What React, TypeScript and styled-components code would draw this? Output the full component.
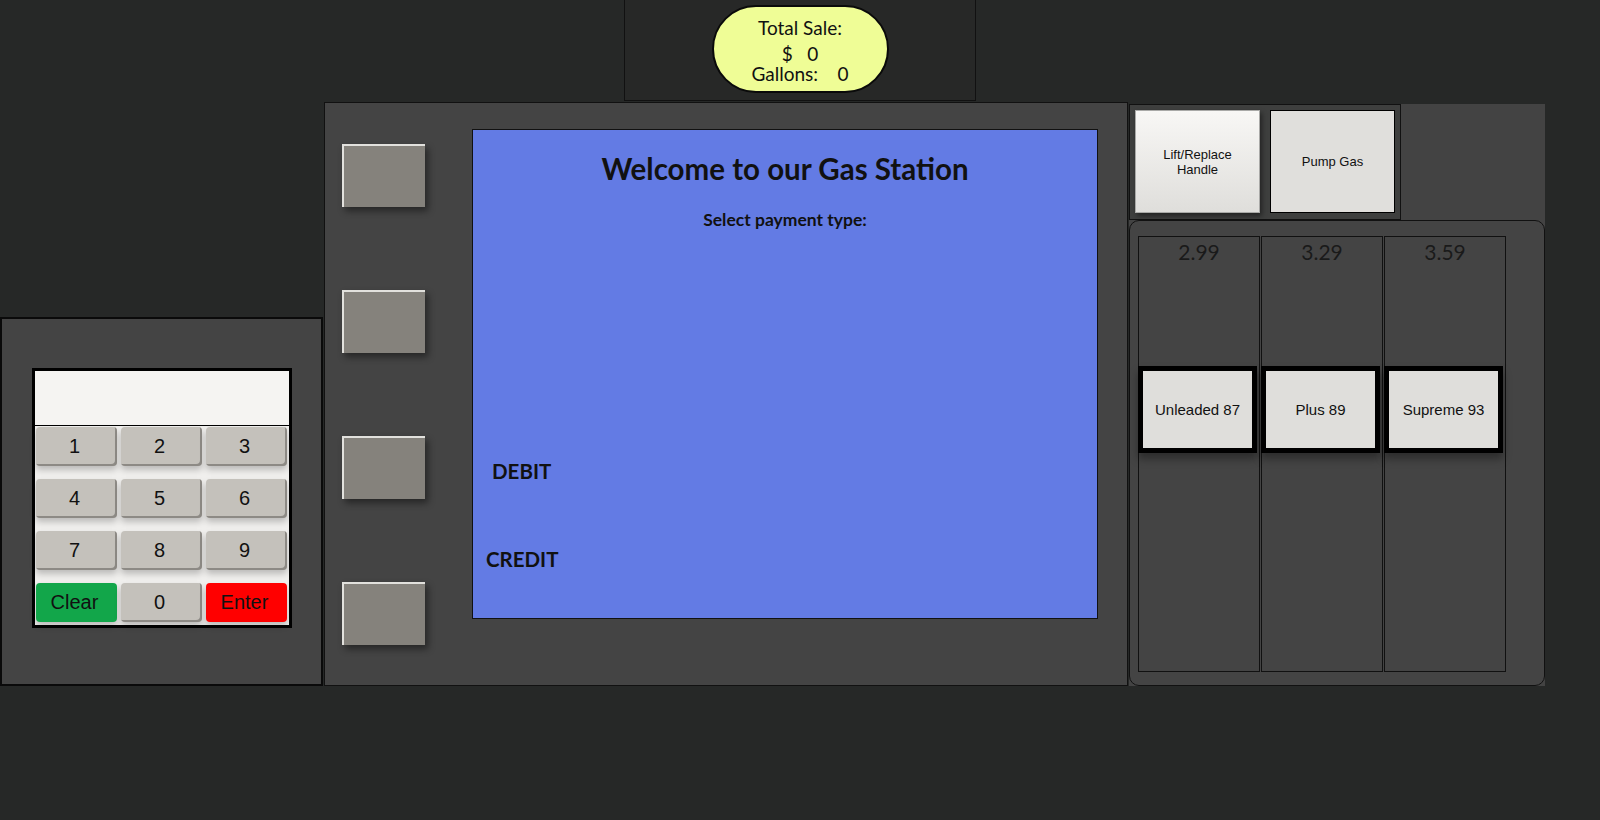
import { FC } from 'react';
import styled, { createGlobalStyle } from 'styled-components';

const GlobalStyle = createGlobalStyle`
  html, body {
    margin: 0;
    padding: 0;
    background: #262827;
  }

  body {
    font-family: Lato, 'Open Sans', sans-serif;
    color: #111;
  }
`;

const Page = styled.div`
  width: 1600px;
  height: 820px;
  display: flex;
  flex-direction: column;
`;

const Header = styled.div`
  width: 350px;
  height: 100px;
  margin: 0 auto;
  border: 1px solid #111;
  border-top: none;
  background: #272827;
  display: flex;
  justify-content: center;
  align-items: flex-start;
`;

const Readout = styled.div`
  width: 173px;
  height: 73px;
  margin-top: 5px;
  padding-top: 11px;
  border: 2px solid #0a0a0a;
  border-radius: 44px;
  background: #effd96;
  display: flex;
  flex-direction: column;
  align-items: center;
`;

const ReadoutLine = styled.div<{ $gap?: number }>`
  font-size: 19px;
  line-height: 20px;
  white-space: pre;
  margin-top: ${(p) => p.$gap ?? 0}px;
`;

const Main = styled.div`
  display: flex;
  align-items: flex-end;
  margin-top: 1px;
`;

const KeypadPanel = styled.div`
  width: 319px;
  height: 316px;
  padding-top: 49px;
  margin-right: 1px;
  border: 2px solid #0a0a0a;
  background: #444;
  display: flex;
  justify-content: center;
`;

const Keypad = styled.div`
  width: 254px;
  height: 254px;
  border: 3px solid #000;
  background: #f0efed;
  display: flex;
  flex-direction: column;
`;

const PinDisplay = styled.div`
  height: 54px;
  background: #f5f4f2;
  border-bottom: 1px solid #000;
`;

const Keys = styled.div`
  display: grid;
  grid-template-columns: repeat(3, 1fr);
  grid-auto-rows: 39px;
  column-gap: 4px;
  row-gap: 13px;
  padding: 1px 2px 0 1px;
`;

const keyColors = {
  num: '#c4c1bb',
  clear: '#12a64a',
  enter: '#ff0000',
};

const Key = styled.div<{ $tone: keyof typeof keyColors }>`
  background: ${(p) => keyColors[p.$tone]};
  border-radius: 4px;
  box-shadow: ${(p) =>
    p.$tone === 'num'
      ? 'inset -2px -2px 0 #8d8a85, 0 4px 6px rgba(0, 0, 0, 0.22)'
      : '0 4px 6px rgba(0, 0, 0, 0.22)'};
  font-family: 'Liberation Sans', Arial, sans-serif;
  font-size: 20px;
  color: #111;
  display: flex;
  align-items: center;
  justify-content: center;
  padding-right: 3px;
`;

const Console = styled.div`
  width: 785px;
  height: 582px;
  padding-left: 17px;
  margin-right: 1px;
  border: 1px solid #111;
  background: #444;
  display: flex;
  align-items: flex-start;
`;

const SoftKeys = styled.div`
  display: flex;
  flex-direction: column;
  gap: 83px;
  margin-top: 41px;
`;

const SoftKey = styled.div`
  width: 81px;
  height: 61px;
  background: #85827c;
  border-top: 2px solid #e2e1dd;
  border-left: 2px solid #e2e1dd;
  box-shadow: 3px 4px 7px rgba(0, 0, 0, 0.45);
`;

const Screen = styled.div`
  width: 624px;
  height: 488px;
  margin: 26px 0 0 47px;
  border: 1px solid #111;
  background: #637be4;
  display: flex;
  flex-direction: column;
  align-items: center;
  font-weight: 700;
`;

const Title = styled.h1`
  margin: 20px 0 0;
  font-size: 29.5px;
  line-height: 38px;
  font-weight: 700;
`;

const Subtitle = styled.div`
  margin-top: 22px;
  font-size: 17.5px;
  line-height: 20px;
`;

const PayOption = styled.div<{ $indent: number; $gap: number }>`
  align-self: flex-start;
  margin: ${(p) => p.$gap}px 0 0 ${(p) => p.$indent}px;
  font-size: 20.5px;
  line-height: 24px;
`;

const RightColumn = styled.div`
  width: 416px;
  height: 582px;
  background: #434343;
  display: flex;
  flex-direction: column;
`;

const HandleBox = styled.div`
  width: 260px;
  height: 104px;
  padding: 5px;
  border: 1px solid #111;
  background: #3e3f3e;
  display: flex;
  gap: 10px;
`;

const HandleButton = styled.div<{ $lifted?: boolean }>`
  width: 123px;
  height: 101px;
  border: 1px solid ${(p) => (p.$lifted ? '#a9a9a7' : '#000')};
  background: ${(p) =>
    p.$lifted ? 'linear-gradient(#f8f7f5, #dfdedb)' : '#e0dfdc'};
  box-shadow: ${(p) => (p.$lifted ? '2px 3px 5px rgba(0, 0, 0, 0.45)' : 'none')};
  font-family: 'Liberation Sans', Arial, sans-serif;
  font-size: 13px;
  line-height: 15px;
  text-align: center;
  display: flex;
  align-items: center;
  justify-content: center;
`;

const GradePanel = styled.div`
  flex: 1;
  border: 1px solid #111;
  border-radius: 10px;
  background: #444;
  display: flex;
  gap: 1px;
  padding: 15px 0 0 8px;
`;

const GradeColumn = styled.div`
  width: 120px;
  height: 434px;
  border: 1px solid #111;
  display: flex;
  flex-direction: column;
  align-items: flex-start;
`;

const Price = styled.div`
  width: 100%;
  height: 127px;
  padding-top: 2px;
  text-align: center;
  font-size: 21px;
  line-height: 25px;
  color: #1a1a1a;
`;

const GradeButton = styled.div`
  width: 109px;
  height: 77px;
  margin-left: -1px;
  border: 5px solid #000;
  background: #dfdedb;
  box-shadow: 0 6px 8px rgba(0, 0, 0, 0.35);
  font-family: 'Liberation Sans', Arial, sans-serif;
  font-size: 15px;
  display: flex;
  align-items: center;
  justify-content: center;
`;

const keys: { label: string; tone: keyof typeof keyColors }[] = [
  { label: '1', tone: 'num' },
  { label: '2', tone: 'num' },
  { label: '3', tone: 'num' },
  { label: '4', tone: 'num' },
  { label: '5', tone: 'num' },
  { label: '6', tone: 'num' },
  { label: '7', tone: 'num' },
  { label: '8', tone: 'num' },
  { label: '9', tone: 'num' },
  { label: 'Clear', tone: 'clear' },
  { label: '0', tone: 'num' },
  { label: 'Enter', tone: 'enter' },
];

const grades = [
  { price: '2.99', name: 'Unleaded 87' },
  { price: '3.29', name: 'Plus 89' },
  { price: '3.59', name: 'Supreme 93' },
];

const App: FC = () => (
  <Page>
    <GlobalStyle />
    <Header>
      <Readout>
        <ReadoutLine>Total Sale:</ReadoutLine>
        <ReadoutLine $gap={6}>{'$   0'}</ReadoutLine>
        <ReadoutLine>{'Gallons:    0'}</ReadoutLine>
      </Readout>
    </Header>
    <Main>
      <KeypadPanel>
        <Keypad>
          <PinDisplay />
          <Keys>
            {keys.map((k) => (
              <Key key={k.label} $tone={k.tone}>
                {k.label}
              </Key>
            ))}
          </Keys>
        </Keypad>
      </KeypadPanel>
      <Console>
        <SoftKeys>
          <SoftKey />
          <SoftKey />
          <SoftKey />
          <SoftKey />
        </SoftKeys>
        <Screen>
          <Title>Welcome to our Gas Station</Title>
          <Subtitle>Select payment type:</Subtitle>
          <PayOption $indent={19} $gap={229}>DEBIT</PayOption>
          <PayOption $indent={13} $gap={64}>CREDIT</PayOption>
        </Screen>
      </Console>
      <RightColumn>
        <HandleBox>
          <HandleButton $lifted>
            Lift/Replace
            <br />
            Handle
          </HandleButton>
          <HandleButton>Pump Gas</HandleButton>
        </HandleBox>
        <GradePanel>
          {grades.map((g) => (
            <GradeColumn key={g.name}>
              <Price>{g.price}</Price>
              <GradeButton>{g.name}</GradeButton>
            </GradeColumn>
          ))}
        </GradePanel>
      </RightColumn>
    </Main>
  </Page>
);

export default App;
